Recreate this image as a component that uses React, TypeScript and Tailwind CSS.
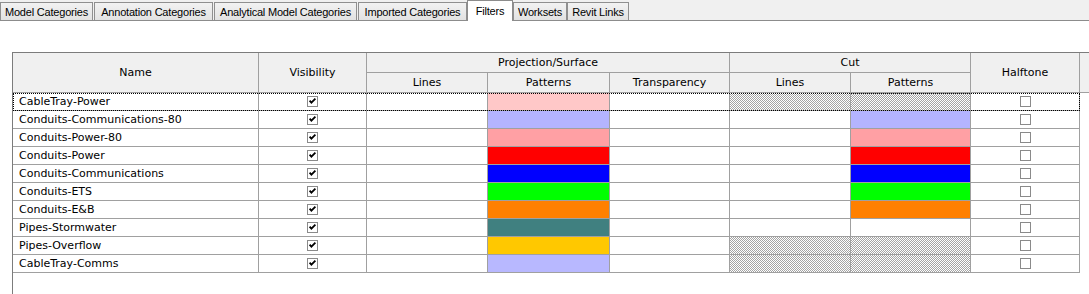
import { Fragment } from 'react';

type Row = {
  name: string;
  proj: string;
  cutLines?: string;
  cutPat?: string;
};

const HATCH =
  'bg-[image:repeating-conic-gradient(#a4a4a4_0%_25%,#ffffff_0%_50%)] bg-[length:2px_2px]';

const rows: Row[] = [
  { name: 'CableTray-Power', proj: 'bg-[#ffc8c8]', cutLines: HATCH, cutPat: HATCH },
  { name: 'Conduits-Communications-80', proj: 'bg-[#b4b4ff]', cutPat: 'bg-[#b4b4ff]' },
  { name: 'Conduits-Power-80', proj: 'bg-[#ffa0a4]', cutPat: 'bg-[#ffa0a4]' },
  { name: 'Conduits-Power', proj: 'bg-[#ff0000]', cutPat: 'bg-[#ff0000]' },
  { name: 'Conduits-Communications', proj: 'bg-[#0000ff]', cutPat: 'bg-[#0000ff]' },
  { name: 'Conduits-ETS', proj: 'bg-[#00ff00]', cutPat: 'bg-[#00ff00]' },
  { name: 'Conduits-E&B', proj: 'bg-[#ff8000]', cutPat: 'bg-[#ff8000]' },
  { name: 'Pipes-Stormwater', proj: 'bg-[#408080]' },
  { name: 'Pipes-Overflow', proj: 'bg-[#ffc800]', cutLines: HATCH, cutPat: HATCH },
  { name: 'CableTray-Comms', proj: 'bg-[#b8b8ff]', cutLines: HATCH, cutPat: HATCH },
];

const tabs: { label: string; w: string; ml: string; active?: boolean }[] = [
  { label: 'Model Categories', w: 'w-[93px]', ml: 'ml-0' },
  { label: 'Annotation Categories', w: 'w-[119px]', ml: 'ml-[1px]' },
  { label: 'Analytical Model Categories', w: 'w-[143px]', ml: 'ml-[1px]' },
  { label: 'Imported Categories', w: 'w-[109px]', ml: 'ml-[1px]' },
  { label: 'Filters', w: 'w-[46px]', ml: 'ml-0', active: true },
  { label: 'Worksets', w: 'w-[54px]', ml: 'ml-0' },
  { label: 'Revit Links', w: 'w-[62px]', ml: 'ml-0' },
];

function Check({ checked }: { checked?: boolean }) {
  return (
    <svg width="11" height="11" viewBox="0 0 11 11" className="block">
      <rect x="0.5" y="0.5" width="10" height="10" fill="#ffffff" stroke="#8a8a8a" />
      {checked && (
        <path d="M2.6 4.6 L4.4 6.6 L8.4 2.7" stroke="#000000" strokeWidth="1.8" fill="none" />
      )}
    </svg>
  );
}

const cell = 'h-full border-r border-b border-[#a0a0a0] flex items-center';
const head = 'bg-[#f0f0f0] border-r border-b border-[#a0a0a0] flex items-center justify-center pt-[2px]';

export default function App() {
  return (
    <div className="h-[294px] w-[1089px] overflow-hidden bg-white text-black font-['DejaVu_Sans',sans-serif] text-[11px]">
      {/* tab strip */}
      <div className="flex h-[21px] items-end border-b border-[#8c8c8c] bg-[#f0f0f0] font-['Liberation_Sans',Arial,sans-serif] text-[11px] tracking-[-0.2px]">
        {tabs.map((t) =>
          t.active ? (
            <div
              key={t.label}
              className={`${t.w} ${t.ml} relative -mb-px flex h-[21px] items-start justify-center border border-b-0 border-[#8c8c8c] bg-white pt-[2px]`}
            >
              {t.label}
            </div>
          ) : (
            <div
              key={t.label}
              className={`${t.w} ${t.ml} flex h-[18px] items-center justify-center border border-b-0 border-[#8f8f8f] bg-gradient-to-b from-[#f2f2f2] to-[#e2e2e2] pt-px`}
            >
              {t.label}
            </div>
          ),
        )}
      </div>

      <div className="pl-[12px] pt-[31px]">
        <div className="h-[242px] w-[1100px] border-l border-t border-[#7c7c7c]">
          {/* header */}
          <div className="flex h-[40px]">
            <div className={`${head} w-[246px]`}>Name</div>
            <div className={`${head} w-[108px]`}>Visibility</div>
            <div className="flex w-[363px] flex-col">
              <div className={`${head} h-[20px]`}>Projection/Surface</div>
              <div className="flex h-[20px]">
                <div className={`${head} w-[121px]`}>Lines</div>
                <div className={`${head} w-[122px]`}>Patterns</div>
                <div className={`${head} w-[120px]`}>Transparency</div>
              </div>
            </div>
            <div className="flex w-[241px] flex-col">
              <div className={`${head} h-[20px]`}>Cut</div>
              <div className="flex h-[20px]">
                <div className={`${head} w-[121px]`}>Lines</div>
                <div className={`${head} w-[120px]`}>Patterns</div>
              </div>
            </div>
            <div className={`${head} w-[109px]`}>Halftone</div>
            <div className="flex-1 border-b border-[#a0a0a0] bg-[#f0f0f0]" />
          </div>

          {/* rows */}
          {rows.map((r, i) => (
            <Fragment key={r.name}>
              <div className="flex h-[18px]">
                <div
                  className={`flex h-full w-[1067px] ${
                    i === 0 ? 'outline-1 outline-dotted outline-black -outline-offset-1' : ''
                  }`}
                >
                  <div className={`${cell} w-[246px] pl-[6px] pt-[2px]`}>{r.name}</div>
                  <div className={`${cell} w-[108px] justify-center`}>
                    <Check checked />
                  </div>
                  <div className={`${cell} w-[121px]`} />
                  <div className={`${cell} w-[122px] ${r.proj}`} />
                  <div className={`${cell} w-[120px]`} />
                  <div className={`${cell} w-[121px] ${r.cutLines ?? ''}`} />
                  <div className={`${cell} w-[120px] ${r.cutPat ?? ''}`} />
                  <div className={`${cell} w-[109px] justify-center`}>
                    <Check />
                  </div>
                </div>
              </div>
            </Fragment>
          ))}
        </div>
      </div>
    </div>
  );
}
